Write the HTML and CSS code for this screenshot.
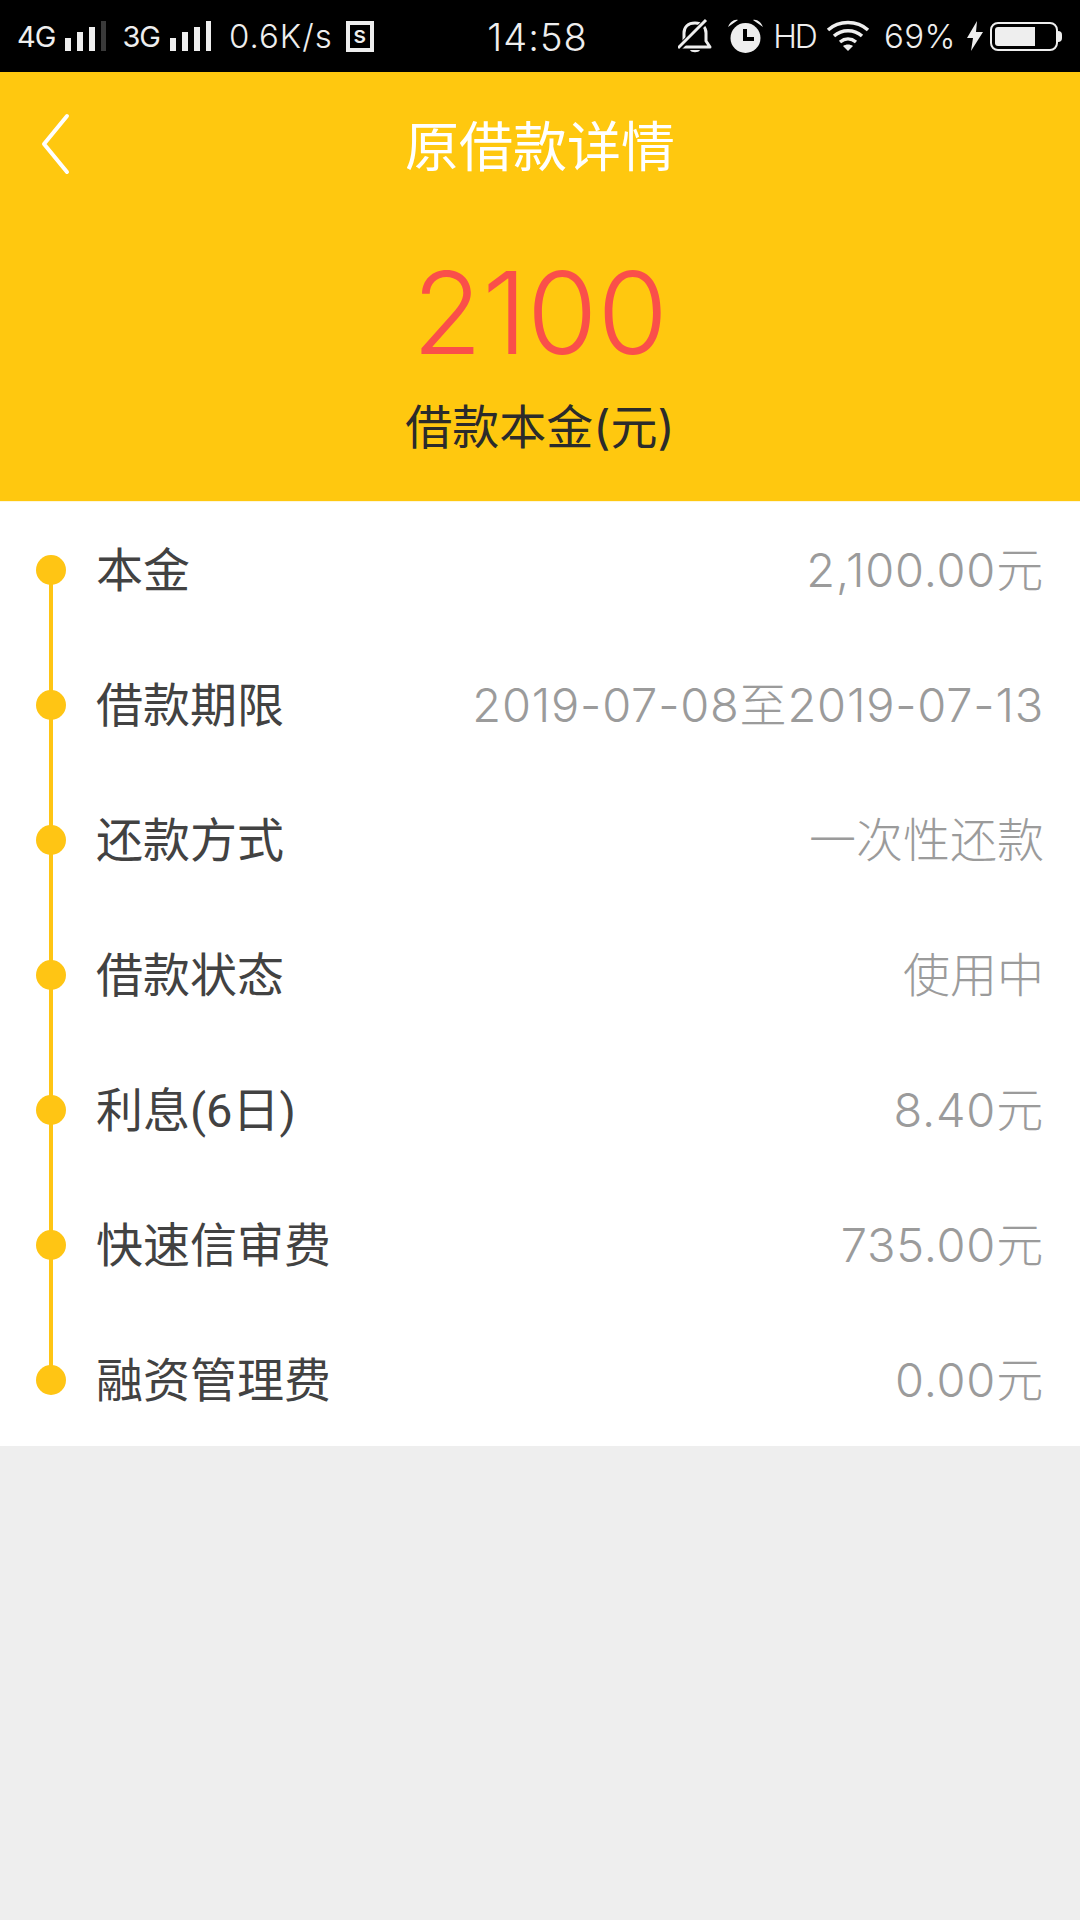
FILE: index.html
```html
<!DOCTYPE html>
<html lang="zh-CN">
<head>
    <meta charset="UTF-8">
    <title>原借款详情</title>
    <link rel="stylesheet" href="styles.css">
</head>
<body>
    <div class="status-bar">
        <div class="status-left">
            <span class="net">4G</span>
            <svg class="bars" width="42" height="30" viewBox="0 0 42 30"><g fill="#eee"><rect x="0" y="17" width="6" height="13"/><rect x="12" y="11" width="6" height="19"/><rect x="24" y="6" width="6" height="24"/><rect x="36" y="0" width="5" height="30" fill="#3a3a3a"/></g></svg>
            <span class="net net-second">3G</span>
            <svg class="bars" width="42" height="30" viewBox="0 0 42 30"><g fill="#eee"><rect x="0" y="17" width="6" height="13"/><rect x="12" y="11" width="6" height="19"/><rect x="24" y="6" width="6" height="24"/><rect x="36" y="0" width="5" height="30"/></g></svg>
            <span class="speed">0.6K/s</span>
            <div class="s-icon">s</div>
        </div>
        <div class="clock">14:58</div>
        <div class="status-right">
            <svg width="34" height="36" viewBox="0 0 34 36"><path d="M2 29h30l-4-6v-8c0-6-4-10-11-10S6 9 6 15v8z" fill="none" stroke="#eee" stroke-width="3" stroke-linejoin="round"/><path d="M12 32c1 3 9 3 10 0z" fill="#eee"/><path d="M0 31L29 2" stroke="#000" stroke-width="6"/><path d="M0 30L28 2" stroke="#eee" stroke-width="3"/></svg>
            <svg class="alarm" width="35" height="34" viewBox="0 0 35 34"><circle cx="17.5" cy="19" r="15" fill="#eee"/><path d="M0 8c2-5 6-8 10-7zM35 8c-2-5-6-8-10-7z" fill="#eee"/><path d="M17 10v10h9" fill="none" stroke="#000" stroke-width="4"/></svg>
            <span class="hd">HD</span>
            <svg width="44" height="32" viewBox="0 0 44 32"><g fill="none" stroke="#eee" stroke-width="3.5"><path d="M2 10c11-10 29-10 40 0"/><path d="M8 16c8-7 20-7 28 0"/><path d="M14 22c5-4 11-4 16 0"/></g><path d="M17 26c3-2 7-2 10 0l-5 5z" fill="#eee"/></svg>
            <span class="battery-pct">69%</span>
            <svg width="18" height="30" viewBox="0 0 18 30"><path d="M11 0L1 17h6l-2 13L17 11h-7z" fill="#eee"/></svg>
            <div class="battery"><div class="battery-level"></div></div>
        </div>
    </div>

    <div class="header">
        <div class="nav">
            <svg class="back" width="32" height="62" viewBox="0 0 32 62"><path d="M28 3L5 31l23 28" fill="none" stroke="#fff" stroke-width="4" stroke-linecap="round" stroke-linejoin="round"/></svg>
            <h1>原借款详情</h1>
        </div>
        <div class="amount">2100</div>
        <div class="amount-label">借款本金(元)</div>
    </div>

    <ul class="detail-list">
        <li class="detail-item"><span class="dot"></span><span class="name">本金</span><span class="value num">2,100.00元</span></li>
        <li class="detail-item"><span class="dot"></span><span class="name">借款期限</span><span class="value num">2019-07-08至2019-07-13</span></li>
        <li class="detail-item"><span class="dot"></span><span class="name">还款方式</span><span class="value">一次性还款</span></li>
        <li class="detail-item"><span class="dot"></span><span class="name">借款状态</span><span class="value">使用中</span></li>
        <li class="detail-item"><span class="dot"></span><span class="name">利息(6日)</span><span class="value num">8.40元</span></li>
        <li class="detail-item"><span class="dot"></span><span class="name">快速信审费</span><span class="value num">735.00元</span></li>
        <li class="detail-item"><span class="dot"></span><span class="name">融资管理费</span><span class="value num">0.00元</span></li>
    </ul>
</body>
</html>
```

FILE: styles.css
```css
* {
    box-sizing: border-box;
}
body {
    margin: 0;
    height: 1920px;
    overflow: hidden;
    background: #eeeeee;
    font-family: Inter, "Noto Sans CJK SC", sans-serif;
}

/* status bar */
.status-bar {
    height: 72px;
    background: #000;
    color: #eee;
    display: grid;
    grid-template-columns: 1fr auto 1fr;
    align-items: center;
    padding: 0 22px 0 17px;
}
.status-left, .status-right {
    display: flex;
    align-items: center;
}
.status-right {
    justify-content: flex-end;
}
.status-left svg, .status-right svg {
    flex: none;
}
.net {
    font-size: 29px;
    letter-spacing: -1px;
    margin-right: 10px;
}
.net-second {
    margin-left: 15px;
}
.speed {
    font-size: 33px;
    font-weight: 300;
    letter-spacing: 1px;
    margin-left: 17px;
}
.s-icon {
    width: 28px;
    height: 31px;
    margin-left: 13px;
    border: 4px solid #eee;
    font-size: 24px;
    font-weight: 500;
    line-height: 19px;
    text-align: center;
}
.clock {
    font-size: 38px;
    font-weight: 300;
    letter-spacing: 1px;
    padding-top: 2px;
}
.status-right .alarm {
    margin-left: 16px;
}
.hd {
    font-size: 32px;
    font-weight: 300;
    letter-spacing: -2px;
    margin: 0 10px 0 10px;
}
.battery-pct {
    font-size: 33px;
    font-weight: 300;
    letter-spacing: 0.5px;
    margin: 0 10px 0 14px;
}
.battery {
    width: 68px;
    height: 29px;
    margin-left: 6px;
    border: 2px solid #eee;
    border-radius: 8px;
    padding: 3px;
    position: relative;
}
.battery::after {
    content: "";
    position: absolute;
    right: -6px;
    top: 7px;
    width: 4px;
    height: 11px;
    background: #eee;
    border-radius: 0 4px 4px 0;
}
.battery-level {
    width: 69%;
    height: 100%;
    background: #eee;
    border-radius: 3px 0 0 3px;
}

/* yellow header */
.header {
    height: 429px;
    background: #ffc80f;
    text-align: center;
}
.nav {
    height: 148px;
    display: flex;
    align-items: center;
    justify-content: center;
    position: relative;
    padding-bottom: 6px;
}
.back {
    position: absolute;
    left: 39px;
    top: 41px;
}
h1 {
    margin: 0;
    font-size: 54px;
    font-weight: 400;
    color: #fff;
}
.amount {
    font-size: 114px;
    font-weight: 350;
    line-height: 132px;
    margin-top: 27px;
    color: #fa4f4a;
}
.amount-label {
    margin-top: 16px;
    font-size: 47px;
    font-weight: 400;
    line-height: 64px;
    color: #2b2b2b;
}

/* list with the timeline */
.detail-list {
    list-style-type: none;
    margin: 0;
    padding: 0;
    height: 945px;
    background: #fff;
    border-top: 1px solid #fdf6dc;
}
.detail-item {
    height: 135px;
    display: flex;
    align-items: center;
    padding: 0 36px;
    position: relative;
    font-size: 47px;
    font-weight: 300;
}
.dot {
    width: 30px;
    height: 30px;
    border-radius: 50%;
    background: #ffc514;
    margin-right: 30px;
    flex: none;
}
.detail-item:not(:last-child)::after {
    content: "";
    position: absolute;
    left: 49px;
    top: 67px;
    width: 4px;
    height: 135px;
    background: #ffc514;
}
.name {
    color: #424242;
    flex: 1;
    font-family: Roboto, "Noto Sans CJK SC", sans-serif;
    font-weight: 400;
    padding-bottom: 6px;
}
.value {
    color: #9b9b9b;
    padding-bottom: 6px;
}
.num {
    letter-spacing: 0.8px;
}
```
